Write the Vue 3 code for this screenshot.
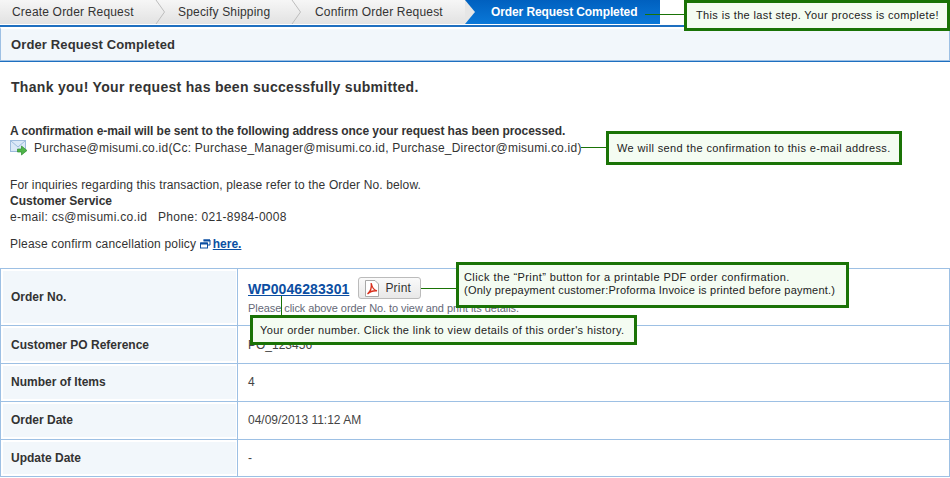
<script setup>
const rows = [
  { label: 'Customer PO Reference', value: 'PO_123456', h: 38 },
  { label: 'Number of Items', value: '4', h: 38 },
  { label: 'Order Date', value: '04/09/2013 11:12 AM', h: 38 },
  { label: 'Update Date', value: '-', h: 37 },
]
</script>

<template>
  <div class="page">
    <nav class="steps">
      <div class="step s1">Create Order Request</div>
      <svg class="chev" width="12" height="24" viewBox="0 0 12 24"><path d="M1 0 L9.5 12 L1 24" fill="none" stroke="#bdbdbd" /></svg>
      <div class="step s2">Specify Shipping</div>
      <svg class="chev" width="12" height="24" viewBox="0 0 12 24"><path d="M1 0 L9.5 12 L1 24" fill="none" stroke="#bdbdbd" /></svg>
      <div class="step s3">Confirm Order Request</div>
      <div class="step active">
        <svg class="notch" width="10" height="24" viewBox="0 0 10 24"><path d="M0 0 L10 12 L0 24 Z" fill="#e6e6e6" /></svg>
        Order Request Completed
      </div>
    </nav>
    <div class="rule"></div>
    <h1 class="title"><span>Order Request Completed</span></h1>

    <h2 class="thanks">Thank you! Your request has been successfully submitted.</h2>

    <p class="strong conf">A confirmation e-mail will be sent to the following address once your request has been processed.</p>
    <p class="mail">
      <svg class="mail-ico" width="18" height="16" viewBox="0 0 18 16">
        <rect x="0.5" y="0.5" width="15" height="11" fill="#dbe8f7" stroke="#9dbbdc" />
        <path d="M1 1 L8 7 L15 1" fill="none" stroke="#9dbbdc" />
        <path d="M7.5 9 H11.5 V6 L17 10.5 L11.5 15 V12 H7.5 Z" fill="#4fb548" stroke="#2e8c30" stroke-width="0.7" />
      </svg>
      <span>Purchase@misumi.co.id(Cc: Purchase_Manager@misumi.co.id, Purchase_Director@misumi.co.id)</span>
    </p>

    <p class="inq">For inquiries regarding this transaction, please refer to the Order No. below.</p>
    <p class="strong line cs">Customer Service</p>
    <p class="line">e-mail: cs@misumi.co.id &nbsp;&nbsp;Phone: 021-8984-0008</p>
    <p class="policy">
      Please confirm cancellation policy
      <svg class="win" width="11" height="10" viewBox="0 0 11 10">
        <path d="M3.5 1 H10 V6 H8" fill="none" stroke="#0b4ea2" />
        <path d="M3.5 1.5 H10" stroke="#0b4ea2" stroke-width="2" />
        <rect x="0.5" y="4" width="7" height="5" fill="#fff" stroke="#0b4ea2" />
        <path d="M0.5 4.5 H7.5" stroke="#0b4ea2" stroke-width="2" />
      </svg>
      <a class="here">here.</a>
    </p>

    <div class="table">
      <div class="row first">
        <div class="th th-first"><span>Order No.</span></div>
        <div class="td order">
          <div class="order-line">
            <a class="order-no">WP0046283301</a>
            <button class="print">
              <svg width="14" height="17" viewBox="0 0 14 17">
                <path d="M0.5 0.5 H10 L13.5 4 V16.5 H0.5 Z" fill="#fff" stroke="#a8a8a8" />
                <path d="M2.5 14 C5 12 6.8 7.5 6.2 3 C7 7.5 8.5 10 12 10.8 C8.5 10.5 5 11.5 2.5 14 Z" fill="none" stroke="#d8301e" stroke-width="1.3" />
              </svg>
              <span>Print</span>
            </button>
          </div>
          <div class="hint">Please click above order No. to view and print its details.</div>
        </div>
      </div>
      <div v-for="r in rows" :key="r.label" class="row" :style="{ height: r.h + 'px' }">
        <div class="th"><span>{{ r.label }}</span></div>
        <div class="td">{{ r.value }}</div>
      </div>
    </div>

    <div class="leader" style="left:645px;top:14px;width:40px;height:1px"></div>
    <div class="callout c1">This is the last step. Your process is complete!</div>

    <div class="leader" style="left:581px;top:147px;width:26px;height:1px"></div>
    <div class="callout c2">We will send the confirmation to this e-mail address.</div>

    <div class="leader" style="left:421px;top:288px;width:35px;height:1px"></div>
    <div class="callout c3">Click the “Print” button for a printable PDF order confirmation.<br /><span class="tight">(Only prepayment customer:Proforma Invoice is printed before payment.)</span></div>

    <div class="leader" style="left:281px;top:296px;width:1px;height:20px"></div>
    <div class="callout c4">Your order number. Click the link to view details of this order's history.</div>
  </div>
</template>

<style scoped>
.page {
  position: relative;
  width: 950px;
  height: 478px;
  overflow: hidden;
  background: #fff;
  font-family: "Liberation Sans", Arial, sans-serif;
  font-size: 12px;
  color: #333;
}
p, h1, h2 { margin: 0; }
.steps {
  display: flex;
  height: 24px;
  line-height: 24px;
  width: 660px;
  background: linear-gradient(#f6f6f6, #e2e2e2);
}
.chev { flex: none; }
.step { flex: none; white-space: nowrap; letter-spacing: 0.18px; }
.s1 { width: 155px; padding-left: 12px; box-sizing: border-box; }
.s2 { width: 124px; padding-left: 11px; box-sizing: border-box; }
.s3 { width: 162px; padding-left: 12px; box-sizing: border-box; }
.active {
  position: relative;
  width: 195px;
  box-sizing: border-box;
  padding-left: 26px;
  font-weight: bold;
  letter-spacing: -0.1px;
  color: #fff;
  background: linear-gradient(#0060bf, #0a78d8);
}
.notch { position: absolute; left: 0; top: 0; }
.rule { height: 2px; margin-top: 1px; background: #1e6fc0; }
.title {
  height: 34px;
  box-sizing: border-box;
  border: 1px solid #9dc0e4;
  border-top: 2px solid #fff;
  box-shadow: 0 1px 0 #1e6fc0;
  background: #f2f7fb;
  display: flex;
  align-items: center;
  padding: 0 0 0 10px;
  font-size: 13px;
  letter-spacing: 0.13px;
  font-weight: bold;
}
.thanks {
  margin: 17px 0 0 11px;
  font-size: 14px;
  line-height: 18px;
  letter-spacing: 0.3px;
  font-weight: bold;
}
.strong { font-weight: bold; }
.conf { margin: 27px 0 0 10px; line-height: 16px; letter-spacing: -0.06px; }
.mail { display: flex; align-items: center; margin-left: 10px; height: 18px; letter-spacing: 0.23px; }
.mail-ico { margin-right: 6px; flex: none; }
.inq { margin: 20px 0 0 10px; line-height: 16px; letter-spacing: 0.13px; }
.line { margin-left: 10px; line-height: 17px; letter-spacing: 0.3px; }
.line.cs { line-height: 16px; letter-spacing: 0; }
.policy { margin: 10px 0 0 10px; line-height: 16px; letter-spacing: 0.18px; }
.win { vertical-align: -1px; margin-right: 2px; }
.here { color: #0b4ea2; font-weight: bold; text-decoration: underline; letter-spacing: 0; }
.table {
  margin-top: 16px;
  border-top: 1px solid #9dc0e4;
  border-left: 1px solid #9dc0e4;
  border-right: 1px solid #9dc0e4;
}
.row {
  display: flex;
  box-sizing: border-box;
  border-bottom: 1px solid #9dc0e4;
}
.row.first { height: 57px; }
.row:nth-child(3) .th, .row:nth-child(3) .td,
.row:nth-child(4) .th, .row:nth-child(4) .td { padding-bottom: 2px; }
.th {
  width: 236px;
  flex: none;
  box-sizing: border-box;
  border: 2px solid #fff;
  border-right-width: 1px;
  background: #f2f7fb;
  display: flex;
  align-items: center;
  padding-left: 8px;
  font-weight: bold;
}
.th-first { padding-bottom: 1px; }
.td {
  flex: 1;
  border-left: 1px solid #9dc0e4;
  padding-left: 10px;
  display: flex;
  align-items: center;
  color: #444;
}
.td.order { flex-direction: column; align-items: flex-start; justify-content: flex-start; }
.order-line { display: flex; align-items: center; margin-top: 8px; height: 22px; }
.order-no {
  color: #0b4ea2;
  font-size: 14px;
  letter-spacing: 0.08px;
  font-weight: bold;
  text-decoration: underline;
  padding-top: 2px;
}
.print {
  margin-left: 9px;
  width: 63px;
  height: 22px;
  box-sizing: border-box;
  border: 1px solid #bbb;
  border-radius: 3px;
  background: linear-gradient(#fafafa, #e8e8e8);
  display: flex;
  align-items: center;
  gap: 6px;
  padding: 0 0 0 6px;
  font: 12px "Liberation Sans", Arial, sans-serif;
  letter-spacing: 0.2px;
  color: #333;
}
.hint { font-size: 11px; letter-spacing: -0.07px; color: #666a78; line-height: 12px; margin-top: 3px; }
.callout {
  position: absolute;
  box-sizing: border-box;
  border: 3px solid #1a7306;
  background: #f4fcf2;
  color: #222;
  font-size: 11px;
  line-height: 13px;
  letter-spacing: 0.42px;
  white-space: nowrap;
}
.tight { letter-spacing: 0.22px; }
.leader { position: absolute; background: #1a7306; }
.c1 { left: 684px; top: 0; width: 266px; height: 31px; padding-left: 9px; padding-top: 6px; letter-spacing: 0.36px; }
.c2 { left: 606px; top: 131px; width: 296px; height: 34px; padding-left: 8px; padding-top: 8px; letter-spacing: 0.38px; }
.c3 { left: 456px; top: 262px; width: 393px; height: 46px; padding-left: 5px; padding-top: 6px; }
.c4 { left: 250px; top: 315px; width: 387px; height: 30px; padding-left: 7px; padding-top: 6px; letter-spacing: 0.37px; }
</style>
